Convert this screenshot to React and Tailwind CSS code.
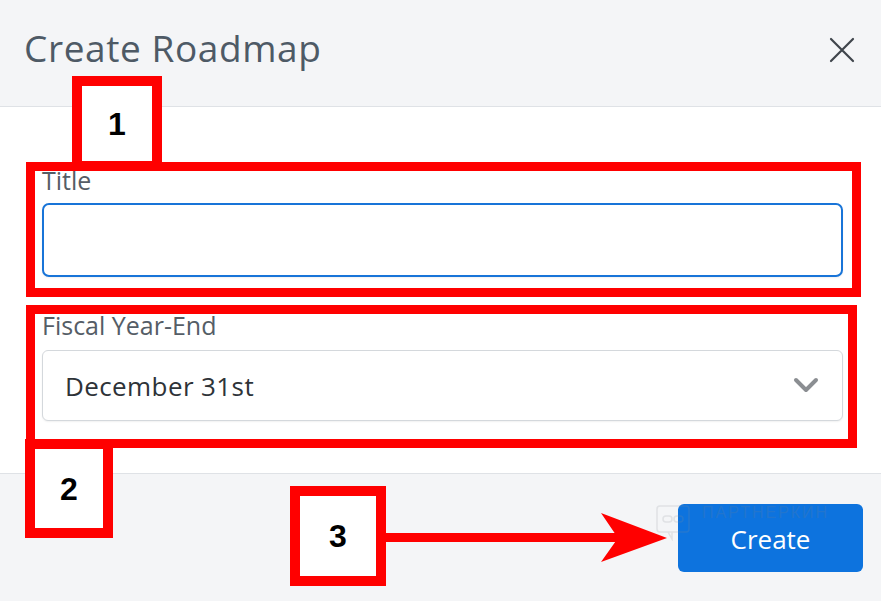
import React from "react";

const font = { fontFamily: '"Open Sans", "Noto Sans", sans-serif' };

function Annotations() {
  return (
    <div className="pointer-events-none absolute inset-0">
      {/* big box 1 */}
      <div className="absolute left-[26px] top-[162px] h-[135px] w-[835px] border-[9px] border-[#ff0000]" />
      {/* big box 2 */}
      <div className="absolute left-[26px] top-[305px] h-[143px] w-[831px] border-[9px] border-[#ff0000]" />
      {/* label 1 */}
      <div className="absolute left-[72px] top-[76px] flex h-[95px] w-[90px] items-center justify-center border-[10px] border-[#ff0000] bg-white">
        <span className="text-[32px] font-bold leading-none text-black" style={{ fontFamily: '"Liberation Sans", Arial, sans-serif' }}>1</span>
      </div>
      {/* label 2 */}
      <div className="absolute left-[25px] top-[439px] flex h-[99px] w-[88px] items-center justify-center border-[10px] border-[#ff0000] bg-white">
        <span className="text-[32px] font-bold leading-none text-black" style={{ fontFamily: '"Liberation Sans", Arial, sans-serif' }}>2</span>
      </div>
      {/* label 3 */}
      <div className="absolute left-[290px] top-[486px] flex h-[100px] w-[96px] items-center justify-center border-[10px] border-[#ff0000] bg-white">
        <span className="text-[32px] font-bold leading-none text-black" style={{ fontFamily: '"Liberation Sans", Arial, sans-serif' }}>3</span>
      </div>
      {/* arrow */}
      <svg className="absolute left-[380px] top-[508px]" width="292" height="60" viewBox="0 0 292 60">
        <rect x="6" y="25" width="236" height="9" fill="#ff0000" />
        <polygon points="221,5 287,30 221,54 238,30" fill="#ff0000" />
      </svg>
      {/* watermark */}
      <div className="absolute left-[656px] top-[505px] flex items-start gap-[12px] opacity-[0.18]">
        <svg width="34" height="36" viewBox="0 0 34 36" fill="none" stroke="#8a8f95" strokeWidth="1.5">
          <rect x="1" y="1" width="32" height="26" rx="3" />
          <path d="M12 27 L16 34 L16 27" />
          <rect x="7" y="11" width="9" height="6" rx="3" />
          <rect x="18" y="11" width="9" height="6" rx="3" />
        </svg>
        <span className="mt-0 text-[16px] leading-[16px] tracking-[2px] text-[#7a8087]" style={{ fontFamily: '"Liberation Sans", Arial, sans-serif' }}>ПАРТНЕРКИН</span>
      </div>
    </div>
  );
}

export default function App() {
  return (
    <div className="relative h-[601px] w-[881px] overflow-hidden bg-white" style={font}>
      {/* header */}
      <div className="flex h-[107px] items-start justify-between border-b border-[#dfe2e6] bg-[#f4f5f7] pl-[24px] pr-[26px]">
        <div className="pt-[26px] text-[37px] leading-[44px] tracking-[0.6px] text-[#4e5a66]">Create Roadmap</div>
        <svg className="mt-[37px]" width="26" height="26" viewBox="0 0 26 26" fill="none" stroke="#3f454c" strokeWidth="2.2" strokeLinecap="round">
          <path d="M2 2 L24 24 M24 2 L2 24" />
        </svg>
      </div>

      {/* body */}
      <div className="flex h-[367px] flex-col border-b border-[#dfe2e6] bg-white pl-[42px] pr-[38px] pt-[58px]">
        <label className="text-[25px] leading-[30px] text-[#555d66]">Title</label>
        <div className="mt-[8px] h-[74px] w-full rounded-[7px] border-2 border-[#1874d8] bg-white shadow-[0_1px_2px_rgba(0,0,0,0.06)]" />
        <label className="mt-[33px] text-[25px] leading-[30px] text-[#555d66]">Fiscal Year-End</label>
        <div className="mt-[10px] flex h-[71px] w-full items-center justify-between rounded-[6px] border border-[#d4d8dc] bg-white pl-[22px] pr-[23px] shadow-[0_1px_2px_rgba(0,0,0,0.06)]">
          <span className="text-[26px] leading-none tracking-[0.4px] text-[#2e3338]">December 31st</span>
          <svg width="26" height="17" viewBox="0 0 26 17" fill="none" stroke="#8b8e92" strokeWidth="4" strokeLinecap="round" strokeLinejoin="round">
            <path d="M3 3 L13 13 L23 3" />
          </svg>
        </div>
      </div>

      {/* footer */}
      <div className="flex h-[127px] items-start justify-end bg-[#f4f5f7] pr-[18px] pt-[30px]">
        <button className="flex h-[68px] w-[185px] items-center justify-center rounded-[6px] bg-[#0d73de] pt-[2px] text-[26px] font-medium leading-[20px] text-white">
          Create
        </button>
      </div>

      <Annotations />
    </div>
  );
}
